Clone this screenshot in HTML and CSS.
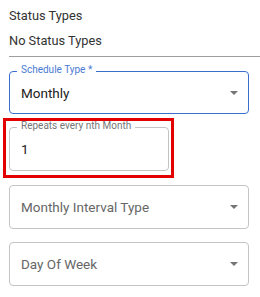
FILE: index.html
```html
<!DOCTYPE html>
<html lang="en">
  <head>
    <meta charset="UTF-8" />
    <meta name="viewport" content="width=device-width, initial-scale=1.0" />
    <link rel="stylesheet" href="styles.css">
    <title>Schedule Form</title>
  </head>
  <body>
    <div class="page">
      <div class="status">
        <div class="status-title">Status Types</div>
        <div class="status-empty">No Status Types</div>
      </div>
      <div class="divider"></div>

      <div class="field field-focused">
        <label class="field-label">Schedule Type *</label>
        <div class="field-value">Monthly</div>
        <svg class="arrow" width="8" height="4" viewBox="0 0 8 4">
          <polygon points="0,0 8,0 4,4" fill="#757575" />
        </svg>
      </div>

      <div class="highlight-wrap">
        <div class="field field-short">
          <label class="field-label">Repeats every nth Month</label>
          <div class="field-value">1</div>
        </div>
        <div class="highlight"></div>
      </div>

      <div class="field">
        <div class="field-value placeholder">Monthly Interval Type</div>
        <svg class="arrow" width="8" height="4" viewBox="0 0 8 4">
          <polygon points="0,0 8,0 4,4" fill="#757575" />
        </svg>
      </div>

      <div class="field">
        <div class="field-value placeholder">Day Of Week</div>
        <svg class="arrow" width="8" height="4" viewBox="0 0 8 4">
          <polygon points="0,0 8,0 4,4" fill="#757575" />
        </svg>
      </div>

      <div class="next-label">Schedule Start Date</div>
    </div>
  </body>
</html>
```

FILE: styles.css
```css
body {
  margin: 0;
  padding: 0;
  font-family: Roboto, "Liberation Sans", sans-serif;
  background-color: white;
  overflow: hidden;
}

.page {
  padding: 3px 0 0 9px;
}

.status {
  color: #333;
  font-size: 12.8px;
  line-height: 25px;
}

.divider {
  margin-top: 3px;
  height: 1px;
  background-color: #9e9e9e;
}

.field {
  position: relative;
  box-sizing: border-box;
  width: 240px;
  height: 44px;
  margin-top: 13px;
  border: 1px solid #c4c4c4;
  border-radius: 4px;
  display: flex;
  align-items: center;
  justify-content: space-between;
}

.divider + .field {
  margin-top: 14px;
}

.field-focused {
  border-color: #3b6fcf;
  height: 43px;
}

.field-short {
  width: 160px;
}

.field-label {
  position: absolute;
  left: 7px;
  top: -7px;
  padding: 0 4px;
  background-color: white;
  font-size: 10px;
  line-height: 10px;
  color: #757575;
}

.field-focused .field-label {
  color: #4a7bd3;
}

.field-value {
  padding-left: 11px;
  font-size: 13.5px;
  color: #222;
}

.placeholder {
  color: #666;
}

.arrow {
  margin-right: 10px;
}

.highlight-wrap {
  position: relative;
  margin-top: 13px;
  margin-bottom: 14px;
}

.highlight-wrap .field {
  margin-top: 0;
}

.highlight-wrap + .field {
  margin-top: 0;
}

.highlight {
  position: absolute;
  left: -6px;
  top: -9px;
  width: 171px;
  height: 60px;
  box-sizing: border-box;
  border: 3px solid #e30000;
}

.next-label {
  margin-top: 9px;
  font-size: 13.5px;
  color: #444;
}
```
